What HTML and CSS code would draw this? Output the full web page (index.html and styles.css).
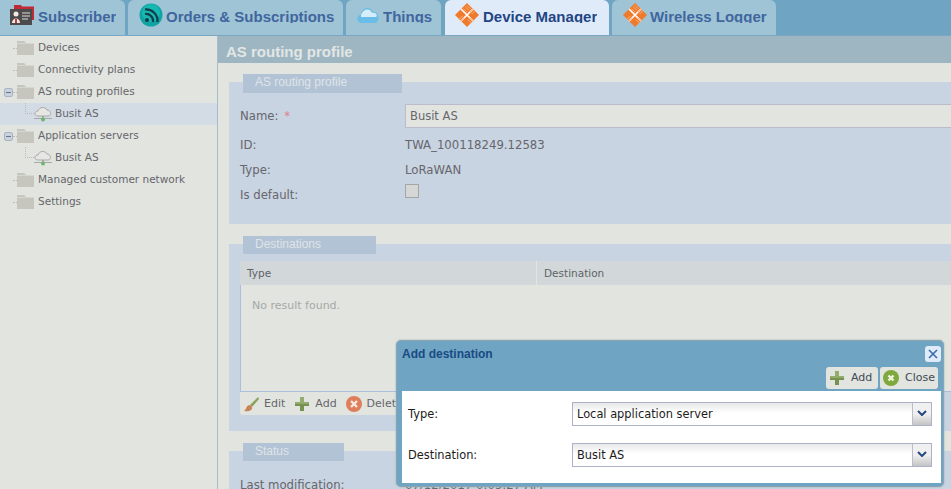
FILE: index.html
```html
<!DOCTYPE html>
<html lang="en">
<head>
<meta charset="utf-8">
<title>Device Manager</title>
<link rel="stylesheet" href="styles.css">
</head>
<body>
<svg class="defs" width="0" height="0" aria-hidden="true">
  <symbol id="diamond" viewBox="0 0 26 26">
    <path d="M13 0 26 13 13 26 0 13Z" fill="#f07a2c"/>
    <path d="M6.500 6.500 19.500 19.500M19.500 6.500 6.500 19.500" stroke="#fff" stroke-width="1.800"/>
    <path d="M9 6 13 10M11 4 15 8M13 2.500 17 6.500M16 10 20 6M18 12 22 8M10 16 6 20M8 14 4 18M16 16 20 20M14 18 18 22" stroke="#ffb27c" stroke-width="1"/>
  </symbol>
  <symbol id="folder" viewBox="0 0 17 14">
    <path d="M0 0H7L9 2H17V14H0Z" fill="#c6c6bf"/>
    <path d="M0 2.500H17" stroke="#d6d6d0" stroke-width="1"/>
  </symbol>
  <symbol id="server" viewBox="0 0 18 16">
    <path d="M4 10C0 10 0 5 4 5 5 1 11 0 13 4 17 4 18 10 14 10Z" fill="#e6e6e2" stroke="#a8a8a8"/>
    <path d="M0 12.500H18" stroke="#a8a8a8"/>
    <path d="M9 10V13" stroke="#888"/>
    <circle cx="9" cy="13.500" r="2" fill="#6db46d"/>
  </symbol>
  <symbol id="plus" viewBox="0 0 16 16">
    <path d="M6 1H10V6H15V10H10V15H6V10H1V6H6Z" fill="#76924e"/>
    <path d="M6 1H10V6H15V8H1V6H6Z" fill="#93ab6c"/>
  </symbol>
</svg>

<div class="tabs">
  <div class="tab tab-subscriber">
    <svg class="ic-24" viewBox="0 0 24 24"><path d="M4 2H11L12 3.500H24V17H4Z" fill="#bf2a36"/><path d="M0 6H22V22H0Z" fill="#4c4a4a"/><circle cx="6" cy="11" r="2.500" fill="#f3e9e4"/><path d="M2 20C2 14 10 14 10 20Z" fill="#f3e9e4"/><path d="M5 16H7V20H5Z" fill="#c43a3a"/><path d="M12 10H20M12 13H20M12 16H18" stroke="#ddd" stroke-width="1.200"/></svg>
    <span class="tab-label">Subscriber</span>
  </div>
  <div class="tab tab-orders">
    <svg class="ic-24" viewBox="0 0 24 24"><circle cx="12" cy="12" r="11.500" fill="#0fa4a2"/><circle cx="12" cy="10" r="9" fill="#18b8b2"/><circle cx="8" cy="17" r="2" fill="#123c4a"/><path d="M6 11A7 7 0 0 1 14 19M6 6.500A11.500 11.500 0 0 1 18.500 19" fill="none" stroke="#123c4a" stroke-width="2.200"/></svg>
    <span class="tab-label">Orders &amp; Subscriptions</span>
  </div>
  <div class="tab tab-things">
    <svg class="ic-24" viewBox="0 0 24 24"><path d="M6 20C0 20 0 12 5 12 5 5 14 2 17 9 23 8 25 18 19 20Z" fill="#69bde6"/><path d="M5 13C6 6 14 4 16 10 20 9 22 13 20 14H5Z" fill="#d6eefa"/></svg>
    <span class="tab-label">Things</span>
  </div>
  <div class="tab tab-device is-active">
    <svg class="ic-24"><use href="#diamond"/></svg>
    <span class="tab-label">Device Manager</span>
  </div>
  <div class="tab tab-wireless">
    <svg class="ic-24"><use href="#diamond"/></svg>
    <span class="tab-label">Wireless Logger</span>
  </div>
</div>

<div class="workspace">
  <nav class="tree">
    <div class="node"><span class="expander"></span><i class="dots"></i><svg class="folder"><use href="#folder"/></svg><span>Devices</span></div>
    <div class="node"><span class="expander"></span><i class="dots"></i><svg class="folder"><use href="#folder"/></svg><span>Connectivity plans</span></div>
    <div class="node"><span class="expander is-open"></span><i class="dots"></i><svg class="folder"><use href="#folder"/></svg><span>AS routing profiles</span></div>
    <div class="node child is-selected"><i class="elbow"></i><svg class="server"><use href="#server"/></svg><span>Busit AS</span></div>
    <div class="node"><span class="expander is-open"></span><i class="dots"></i><svg class="folder"><use href="#folder"/></svg><span>Application servers</span></div>
    <div class="node child"><i class="elbow"></i><svg class="server"><use href="#server"/></svg><span>Busit AS</span></div>
    <div class="node"><span class="expander"></span><i class="dots"></i><svg class="folder"><use href="#folder"/></svg><span>Managed customer network</span></div>
    <div class="node"><span class="expander"></span><i class="dots"></i><svg class="folder"><use href="#folder"/></svg><span>Settings</span></div>
  </nav>

  <main class="content">
    <h1 class="page-title">AS routing profile</h1>

    <section class="group group-profile">
      <div class="legend legend-profile">AS routing profile</div>
      <div class="form-row row-name"><span>Name: <b class="req">*</b></span><div class="text-input">Busit AS</div></div>
      <div class="form-row"><span>ID:</span><span>TWA_100118249.12583</span></div>
      <div class="form-row"><span>Type:</span><span>LoRaWAN</span></div>
      <div class="form-row"><span>Is default:</span><span class="checkbox"></span></div>
    </section>

    <section class="group group-dest">
      <div class="legend legend-dest">Destinations</div>
      <div class="table-head"><div class="th th-type">Type</div><div class="th">Destination</div></div>
      <div class="table-body">No result found.</div>
      <div class="toolbar">
        <span class="tool"><svg class="ic-16" viewBox="0 0 16 16"><path d="M15 1 7 9 9 11 16 3Z" fill="#8aa35c"/><path d="M7 9C3 9 4 13 1 15 6 16 10 14 9 11Z" fill="#c98258"/></svg>Edit</span>
        <span class="tool"><svg class="ic-16"><use href="#plus"/></svg>Add</span>
        <span class="tool"><svg class="ic-16" viewBox="0 0 16 16"><circle cx="8" cy="8" r="8" fill="#de7f5c"/><path d="M5 5 11 11M11 5 5 11" stroke="#f5e8df" stroke-width="2.400"/></svg>Delete</span>
      </div>
    </section>

    <section class="group group-status">
      <div class="legend legend-status">Status</div>
      <div class="form-row row-status"><span>Last modification:</span><span>07/12/2017 0:05:27 AM</span></div>
    </section>
  </main>
</div>

<div class="dialog">
  <div class="dialog-head">
    <span class="dialog-title">Add destination</span>
    <span class="dialog-x"><svg width="10" height="10" viewBox="0 0 10 10"><path d="M1 1 9 9M9 1 1 9" stroke="#3c6aa8" stroke-width="1.600"/></svg></span>
  </div>
  <div class="dialog-actions">
    <span class="btn btn-add"><svg class="ic-16"><use href="#plus"/></svg>Add</span>
    <span class="btn btn-close"><svg class="ic-16" viewBox="0 0 16 16"><circle cx="8" cy="8" r="8" fill="#7fa83e"/><path d="M5.500 5.500 10.500 10.500M10.500 5.500 5.500 10.500" stroke="#f0f5e0" stroke-width="2.400"/></svg>Close</span>
  </div>
  <div class="dialog-body">
    <div class="dialog-row"><span>Type:</span><div class="select"><span class="select-value">Local application server</span><span class="select-arrow"><svg width="10" height="6" viewBox="0 0 10 6"><path d="M1 1 5 5 9 1" fill="none" stroke="#24477f" stroke-width="2"/></svg></span></div></div>
    <div class="dialog-row"><span>Destination:</span><div class="select"><span class="select-value">Busit AS</span><span class="select-arrow"><svg width="10" height="6" viewBox="0 0 10 6"><path d="M1 1 5 5 9 1" fill="none" stroke="#24477f" stroke-width="2"/></svg></span></div></div>
  </div>
</div>
</body>
</html>
```

FILE: styles.css
```css
* { box-sizing: border-box; }
html, body { height: 100%; }
body {
  margin: 0;
  height: 489px;
  overflow: hidden;
  background: #e2e4df;
  color: #66666c;
  font: 11px/14px "DejaVu Sans", sans-serif;
  display: flex;
  flex-direction: column;
}
.defs { position: absolute; }

/* Tabs */
.tabs {
  display: flex;
  flex: none;
  height: 36px;
  background: #6fa5c2;
  border-bottom: 1px solid #7aa8c4;
}
.tab {
  display: flex;
  align-items: center;
  height: 35px;
  margin-right: 3px;
  background: #9ec4d5;
  border-radius: 6px 6px 0 0;
  color: #41669f;
  font: bold 15px/18px "Liberation Sans", sans-serif;
}
.tab.is-active { background: #e0ebfa; color: #1f4583; }
.tab-subscriber { width: 125px; padding-left: 10px; gap: 4px; border-top-left-radius: 0; }
.tab-orders { width: 215px; padding-left: 11px; gap: 3px; }
.tab-things { width: 95px; padding-left: 10px; gap: 3px; margin-right: 4px; }
.tab-device { width: 164px; padding-left: 10px; gap: 4px; }
.tab-wireless { width: 164px; padding-left: 11px; gap: 3px; }
.tab-label {
  display: block;
  height: 15px;
  margin-top: -4px;
  overflow: hidden;
  white-space: nowrap;
}
.ic-24 { width: 24px; height: 24px; flex: none; margin-top: -6px; }
.ic-16 { width: 16px; height: 16px; flex: none; }

/* Layout */
.workspace { display: flex; flex: 1; min-height: 0; }
.tree {
  flex: none;
  width: 218px;
  padding-top: 1px;
  border-right: 1px solid #a9bccd;
  font-size: 10.500px;
}
.node {
  display: flex;
  align-items: center;
  height: 22px;
  padding-left: 4px;
  white-space: nowrap;
}
.node > span:last-child { margin-bottom: 2px; }
.node.is-selected { background: #d3dce4; }
.node .folder { width: 17px; height: 14px; margin-right: 4px; flex: none; }
.node .server { width: 18px; height: 16px; margin-right: 3px; flex: none; }
.expander { width: 9px; height: 9px; flex: none; }
.expander.is-open {
  background: #c9d2dc;
  border: 1px solid #a9b5c5;
  border-radius: 2px;
  display: flex;
  align-items: center;
  justify-content: center;
}
.expander.is-open::before { content: ""; width: 5px; height: 1px; background: #66758a; }
.dots { width: 4px; flex: none; border-top: 1px dotted #bbb; }
.child { padding-left: 25px; }
.elbow {
  width: 9px;
  height: 11px;
  margin-top: -11px;
  flex: none;
  border-left: 1px dotted #bbb;
  border-bottom: 1px dotted #bbb;
}

.content { flex: 1; min-width: 0; overflow: hidden; }
.page-title {
  margin: 0;
  height: 27px;
  padding-left: 8px;
  background: #9db6c2;
  color: #e2e6e4;
  font: bold 15px/32px "Liberation Sans", sans-serif;
}

/* Groups */
.group {
  display: flow-root;
  margin-left: 11px;
  padding: 0 0 0 11px;
  background: #c9d4e2;
  font-size: 11.700px;
}
.group-profile { height: 142px; margin-top: 19px; }
.group-dest { height: 187px; margin-top: 20px; font-size: 11px; }
.group-status { height: 60px; margin-top: 20px; }
.legend {
  height: 18px;
  margin: -8px 0 0 3px;
  padding-left: 12px;
  background: #b3c3d6;
  color: #dfe4e6;
  font: 12px/17px "Liberation Sans", sans-serif;
}
.legend-profile { width: 159px; height: 19px; }
.legend-dest { width: 133px; }
.legend-status { width: 101px; }

.form-row {
  display: grid;
  grid-template-columns: 165px 1fr;
  align-items: center;
  height: 25px;
  white-space: nowrap;
}
.row-name { height: 24px; margin: 11px 0 4px; }
.row-status { margin-top: 11px; }
.req { color: #e0808c; font-weight: normal; margin-left: 2px; }
.text-input {
  height: 24px;
  margin-right: -20px;
  padding-left: 4px;
  background: #e2e4df;
  border: 1px solid #b8bccb;
  font-size: 11.500px;
  line-height: 23px;
}
.checkbox {
  width: 14px;
  height: 14px;
  margin-top: -7px;
  background: #d4d7d6;
  border: 1px solid #a4a6a4;
}

/* Table */
.table-head {
  display: flex;
  height: 24px;
  margin-top: 7px;
  background: #d2d7d9;
  color: #5e6468;
  font-size: 10.500px;
  line-height: 24px;
}
.th { padding-left: 7px; }
.th-type { width: 297px; border-right: 1px solid #e2e4df; }
.table-body {
  height: 107px;
  padding: 14px 11px 0;
  background: #e2e4df;
  border-left: 1px solid #a9bfdc;
  border-bottom: 1px solid #a9bfdc;
  color: #a7a8a8;
}
.toolbar {
  display: flex;
  height: 23px;
  width: 170px;
  padding-left: 3px;
  background: #e2e4df;
  gap: 9px;
  align-items: center;
  border-radius: 0 0 3px 3px;
}
.tool { display: flex; align-items: center; gap: 5px; }

/* Dialog */
.dialog {
  position: absolute;
  left: 396px;
  top: 340px;
  width: 548px;
  height: 147px;
  padding: 0 2px 3px 5px;
  background: #6fa5c2;
  border: 1px solid #8aa4b4;
  border-radius: 5px;
  display: flex;
  flex-direction: column;
  box-shadow: 0 0 2px #9aa;
}
.dialog-head {
  display: flex;
  flex: none;
  justify-content: space-between;
  align-items: flex-start;
  height: 26px;
  padding-top: 5px;
}
.dialog-title {
  margin-top: 1px;
  color: #1a4a85;
  font: bold 12px/15px "Liberation Sans", sans-serif;
}
.dialog-x {
  display: flex;
  align-items: center;
  justify-content: center;
  width: 16px;
  height: 16px;
  background: #e0ebfa;
  border-radius: 3px;
}
.dialog-actions {
  display: flex;
  flex: none;
  justify-content: flex-end;
  gap: 2px;
  height: 24px;
  padding-right: 3px;
}
.btn {
  display: flex;
  align-items: center;
  height: 22px;
  padding: 0 5px 0 3px;
  gap: 6px;
  background: #e2e4df;
  border-radius: 3px;
  color: #3d4a55;
  font-size: 11px;
}
.btn-add { width: 52px; }
.btn-close { width: 58px; }
.dialog-body {
  flex: 1;
  padding: 11px 9px 0 6px;
  background: #fff;
  color: #1c1c1c;
  font-size: 11.400px;
}
.dialog-row {
  display: grid;
  grid-template-columns: 164px 360px;
  align-items: center;
  height: 24px;
  margin-bottom: 17px;
}
.dialog-row:last-child { margin-bottom: 0; }
.select {
  display: flex;
  height: 24px;
  border: 1px solid #aeb2c8;
  background: linear-gradient(#e8e8e8, #fff 45%);
}
.select-value { flex: 1; padding-left: 4px; line-height: 22px; }
.select-arrow {
  width: 19px;
  display: flex;
  align-items: flex-start;
  justify-content: center;
  padding-top: 7px;
  border-left: 1px solid #bbc;
  background: linear-gradient(#f0f0f0, #f0f0f0 50%, #c4c4c4);
}
```
